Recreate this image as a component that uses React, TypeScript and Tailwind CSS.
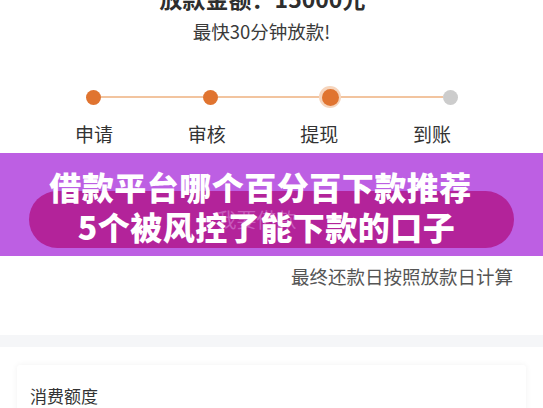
import React from 'react';

const steps = ['申请', '审核', '提现', '到账'];

const Dot: React.FC<{ state: 'done' | 'active' | 'todo' }> = ({ state }) => {
  if (state === 'active') {
    return (
      <div className="w-[22px] h-[22px] rounded-full bg-[#f6d5bd] flex items-center justify-center shrink-0">
        <div className="w-[17px] h-[17px] rounded-full bg-[#e07430]"></div>
      </div>
    );
  }
  return (
    <div
      className={
        state === 'done'
          ? 'w-[15px] h-[15px] rounded-full bg-[#e07430] shrink-0'
          : 'w-[15px] h-[15px] rounded-full bg-[#cccccc] shrink-0'
      }
    ></div>
  );
};

const App: React.FC = () => {
  return (
    <div className="w-[543px] h-[408px] overflow-hidden bg-white font-['Noto_Sans_CJK_SC',sans-serif] text-[#333]">
      {/* amount header, cut off at the top */}
      <div className="-mt-[18px] h-[32px] leading-[32px] text-center text-[23px] font-bold text-[#2e2e2e] pr-[18px]">
        放款金额：15000元
      </div>
      <div className="mt-[5px] h-[24px] leading-[24px] text-center text-[18.5px] text-[#3a3a3a] pr-[20px]">
        最快30分钟放款!
      </div>

      {/* progress */}
      <div className="mt-[44px] ml-[86px] w-[372px] h-[20px] flex items-center">
        <Dot state="done" />
        <div className="flex-1 h-[2px] bg-[#f2c49f]"></div>
        <Dot state="done" />
        <div className="flex-1 h-[2px] bg-[#f2c49f]"></div>
        <Dot state="active" />
        <div className="flex-1 h-[2px] bg-[#f2c49f]"></div>
        <Dot state="todo" />
      </div>
      <div className="mt-[14px] ml-[75px] w-[376px] h-[26px] flex justify-between text-[19px] leading-[26px] text-[#333]">
        {steps.map((s) => (
          <span key={s}>{s}</span>
        ))}
      </div>

      {/* banner */}
      <div className="relative mt-[6px] h-[103px] bg-[#bd5fe3] px-[29px] pt-[38px]">
        <div className="h-[57px] rounded-full bg-[#b3239a] flex items-center justify-center text-[20px] text-[#c85bbd] pr-[30px]">
          我要借款
        </div>
        <div className="absolute inset-0 flex flex-col items-center justify-center pt-[3px] text-white font-black text-[32px] leading-[40px] tracking-[0.5px]">
          <div className="pr-[22px]">借款平台哪个百分百下款推荐</div>
          <div className="pr-[10px]">5个被风控了能下款的口子</div>
        </div>
      </div>

      <div className="mt-[8px] h-[24px] leading-[24px] text-right pr-[30px] text-[18.5px] text-[#555]">
        最终还款日按照放款日计算
      </div>

      <div className="mt-[47px] h-[12px] bg-[#f5f6f8]"></div>

      <div className="mt-[18px] mx-[17px] h-[80px] bg-white rounded-[3px] shadow-[0_0_6px_rgba(0,0,0,0.06)] pl-[13px] pt-[19px]">
        <div className="h-[24px] leading-[24px] text-[17px] text-[#333]">消费额度</div>
      </div>
    </div>
  );
};

export default App;
